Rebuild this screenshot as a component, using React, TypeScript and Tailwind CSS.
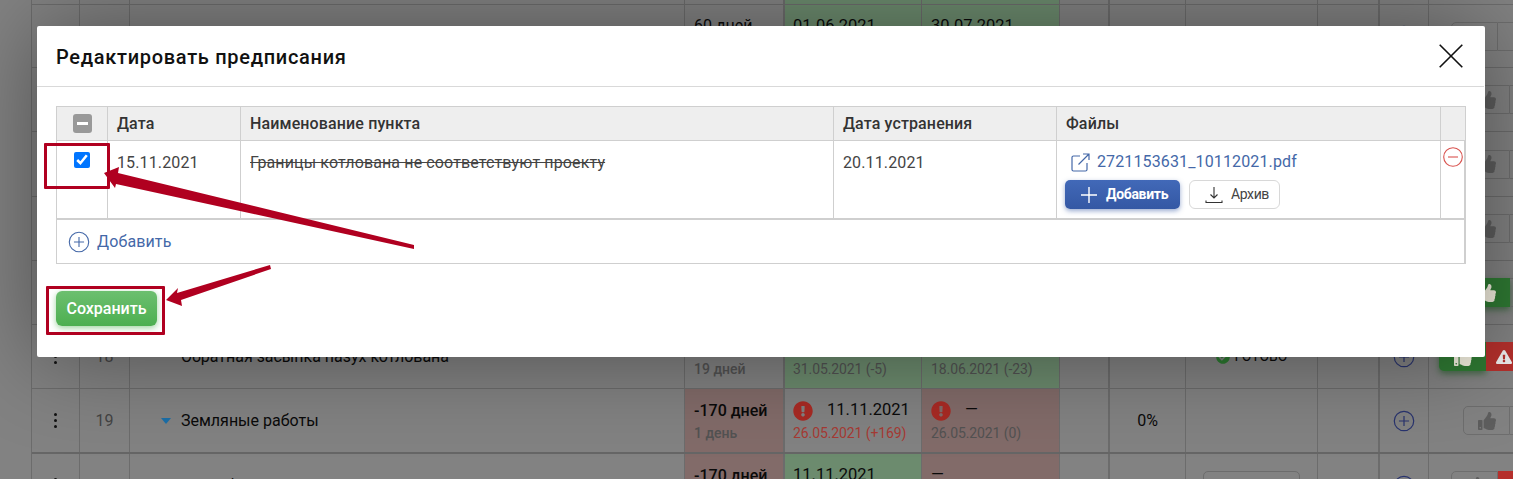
import React from "react";
import { FaThumbsUp, FaExclamationCircle, FaExclamationTriangle, FaCheckCircle } from "react-icons/fa";

const GRID = "grid grid-cols-[48px_50px_555px_100px_137px_138px_50px_76px_132px_62px_49px_85px]";

function Cell({ className = "", children }: { className?: string; children?: React.ReactNode }) {
  return <div className={`border-r border-[#6c6c6c] min-w-0 overflow-hidden ${className}`}>{children}</div>;
}

function PlusCircle({ size, color, strokeWidth = 1.3 }: { size: number; color: string; strokeWidth?: number }) {
  return (
    <svg width={size} height={size} viewBox="0 0 24 24" fill="none" stroke={color} strokeWidth={strokeWidth}>
      <circle cx="12" cy="12" r="10.6" />
      <path d="M12 6.5v11M6.5 12h11" />
    </svg>
  );
}

function Dots() {
  return (
    <div className="flex flex-col gap-[3px] items-center">
      <span className="w-[3px] h-[3px] rounded-full bg-[#111]" />
      <span className="w-[3px] h-[3px] rounded-full bg-[#111]" />
      <span className="w-[3px] h-[3px] rounded-full bg-[#111]" />
    </div>
  );
}

function Like({ variant }: { variant: "outline" | "green" | "greenRed" | "outlineRed" }) {
  const green = variant === "green" || variant === "greenRed";
  return (
    <div className="flex h-[29px] w-[120px]">
      <div
        className={
          green
            ? "w-[47px] shrink-0 h-full rounded-l-[5px] bg-[#2f7a33] text-[#f4f0e0] flex items-center justify-center text-[18px] shadow-[0_3px_6px_rgba(30,90,35,.6)]"
            : "w-[47px] shrink-0 h-full rounded-l-[5px] border border-[#6e6e6e] text-[#5e5e5e] flex items-center justify-center text-[18px]"
        }
      >
        <FaThumbsUp />
      </div>
      {variant === "greenRed" || variant === "outlineRed" ? (
        <div className="flex-1 bg-[#b5302c] text-[#eee] flex items-center pl-[10px] text-[16px]">
          <FaExclamationTriangle />
        </div>
      ) : (
        <div className="flex-1 border border-l-0 border-[#6e6e6e]" />
      )}
    </div>
  );
}

function Row({
  h,
  border = "border-b border-[#6c6c6c]",
  num,
  name,
  caret,
  dur,
  durSub,
  durCls = "font-medium",
  c1,
  c2,
  pct,
  status,
  plus = true,
  like,
  ml = "ml-[34px]",
  durBg = "",
  c1Bg = "",
  c2Bg = "",
}: {
  h: string;
  border?: string;
  num?: string;
  name?: string;
  caret?: boolean;
  dur?: string;
  durSub?: string;
  durCls?: string;
  c1?: React.ReactNode;
  c2?: React.ReactNode;
  pct?: string;
  status?: React.ReactNode;
  plus?: boolean;
  like?: "outline" | "green" | "greenRed" | "outlineRed";
  ml?: string;
  durBg?: string;
  c1Bg?: string;
  c2Bg?: string;
}) {
  return (
    <div className={`${GRID} ${h} ${border}`}>
      <Cell className="flex items-center justify-center">{num && <Dots />}</Cell>
      <Cell className="flex items-center justify-center text-[16px] text-[#444]">{num}</Cell>
      <Cell className="flex items-center pl-[31px] gap-[10px] text-[16px] text-[#0a0a0a] whitespace-nowrap">
        {caret && <span className="w-0 h-0 border-x-[5px] border-x-transparent border-t-[6px] border-t-[#1b6fa8]" />}
        {name && <span className={caret ? "" : "ml-[20px]"}>{name}</span>}
      </Cell>
      <Cell className={`border-r-2 flex flex-col justify-center pl-[9px] pt-[2px] ${durBg}`}>
        <div className={`text-[16px] text-[#0a0a0a] leading-[22px] whitespace-nowrap ${durCls}`}>{dur}</div>
        <div className="text-[14px] font-medium text-[#525252] leading-[22px] whitespace-nowrap">{durSub}</div>
      </Cell>
      <Cell className={`flex flex-col justify-center pl-[8px] pt-[2px] ${c1Bg}`}>{c1}</Cell>
      <Cell className={`flex flex-col justify-center pl-[9px] pt-[2px] ${c2Bg}`}>{c2}</Cell>
      <Cell className="border-r-2" />
      <Cell className="flex items-center justify-center text-[16px] text-[#0a0a0a]">{pct}</Cell>
      <Cell className="flex items-center justify-center px-[17px]">{status}</Cell>
      <Cell className="border-r-2" />
      <Cell className="flex items-center justify-center">{plus && <PlusCircle size={22} color="#28336e" />}</Cell>
      <div className="flex items-center overflow-hidden">
        <div className={ml}>{like && <Like variant={like} />}</div>
      </div>
    </div>
  );
}

function DateLine({ main, sub, subCls = "text-[#525252]", alert }: { main: string; sub?: string; subCls?: string; alert?: boolean }) {
  return (
    <>
      <div className="flex items-center h-[22px] text-[16.5px] text-[#0a0a0a] whitespace-nowrap">
        {alert && <FaExclamationCircle className="text-[20px] text-[#a82a24] mr-[14px]" />}
        {main}
      </div>
      <div className={`text-[14px] tracking-[-0.1px] leading-[22px] whitespace-nowrap ${subCls}`}>{sub}</div>
    </>
  );
}

function Background() {
  const G = "bg-[#6c8b6e]";
  const R = "bg-[#826b69]";
  return (
    <div className="ml-[31px] border-l border-[#6c6c6c]">
      <div className={`${GRID} h-[5px] border-b border-[#6c6c6c]`}>
        <Cell /><Cell /><Cell /><Cell className="border-r-2" /><Cell className={G} /><Cell className={G} /><Cell className="border-r-2" /><Cell /><Cell /><Cell className="border-r-2" /><Cell /><div />
      </div>
      <Row h="h-[63px]" dur="60 дней" durCls="font-normal" durSub="60 дней" c1={<DateLine main="01.06.2021" sub="01.06.2021" />} c2={<DateLine main="30.07.2021" sub="30.07.2021" />} c1Bg={G} c2Bg={G} pct="100%" like="outline" ml="ml-[22px]" />
      <Row h="h-[64px]" like="outline" />
      <Row h="h-[65px]" like="outline" />
      <Row h="h-[64px]" like="outline" />
      <Row h="h-[64px]" like="green" />
      <Row
        h="h-[64px]"
        num="18"
        name="Обратная засыпка пазух котлована"
        dur={"\u00a0"}
        durSub="19 дней"
        c1={<DateLine main={"\u00a0"} sub="31.05.2021 (-5)" />}
        c2={<DateLine main={"\u00a0"} sub="18.06.2021 (-23)" />}
        c1Bg={G}
        c2Bg={G}
        status={
          <span className="flex items-center gap-[5px] text-[14px] text-[#0a0a0a]">
            <FaCheckCircle className="text-[#2c7a30]" />
            ГОТОВО
          </span>
        }
        like="greenRed"
        ml="ml-[10px]"
      />
      <Row
        h="h-[65px]"
        border="border-b-2 border-[#666666]"
        num="19"
        caret
        name="Земляные работы"
        dur="-170 дней"
        durSub="1 день"
        durBg={R}
        c1={<DateLine alert main="11.11.2021" sub="26.05.2021 (+169)" subCls="text-[#a63a34]" />}
        c2={<DateLine alert main="—" sub="26.05.2021 (0)" />}
        c2Bg={R}
        pct="0%"
        like="outline"
      />
      <Row
        h="h-[64px]"
        num="20"
        name="Разработка грунта в котловане экскаватором с погрузкой"
        dur="-170 дней"
        durSub="1 день"
        durBg={R}
        c1={<DateLine main="11.11.2021" sub="26.05.2021" />}
        c1Bg={G}
        c2={<DateLine main="—" sub="26.05.2021" />}
        c2Bg={R}
        pct="0%"
        status={<div className="w-full h-[29px] rounded-[5px] border border-[#6c6c6c]" />}
        like="outlineRed"
        ml="ml-[22px]"
      />
    </div>
  );
}

function Modal() {
  const th = "border-r border-b border-[#cfcfcf] bg-[#eeeeee] h-[34px] flex items-center pl-[9px] text-[16px] tracking-[0.13px] font-medium text-[#333]";
  const td = "border-r border-[#cfcfcf] pl-[9px] pt-[10px] text-[16px] tracking-[0.13px] text-[#444]";
  const cols = "grid grid-cols-[51px_133px_593px_223px_384px_24px]";
  return (
    <div className="absolute left-[37px] top-[26px] w-[1448px] h-[331px] bg-white rounded-[2px] shadow-[0_0_90px_rgba(0,0,0,0.4)]">
      <div className="h-[61px] border-b border-[#d9d9d9] flex items-center justify-between pl-[19px] pr-[21px] mr-[1px]">
        <h2 className="text-[20px] pt-[1px] font-medium text-[#111] tracking-[0.7px]">Редактировать предписания</h2>
        <svg width="24" height="24" viewBox="0 0 24 24" stroke="#111" strokeWidth="1.6" fill="none">
          <path d="M0.7 0.7 23.3 23.3M23.3 0.7 0.7 23.3" />
        </svg>
      </div>
      <div className="ml-[19px] mt-[19px] w-[1410px] border border-[#cfcfcf] border-r-2">
        <div className={cols}>
          <div className={`${th} justify-center !pl-0`}>
            <span className="w-[19px] h-[19px] rounded-[3px] bg-[#999] flex items-center justify-center">
              <span className="w-[11px] h-[3px] bg-white" />
            </span>
          </div>
          <div className={th}>Дата</div>
          <div className={th}>Наименование пункта</div>
          <div className={th}>Дата устранения</div>
          <div className={th}>Файлы</div>
          <div className={`${th} !border-r-0`} />
        </div>
        <div className={`${cols} h-[79px] border-b-2 border-[#cfcfcf]`}>
          <div className="border-r border-[#cfcfcf] flex justify-center pt-[11px]">
            <input type="checkbox" defaultChecked className="w-[16px] h-[16px] accent-[#0075ff]" />
          </div>
          <div className={td}>15.11.2021</div>
          <div className={`${td} line-through`}>Границы котлована не соответствуют проекту</div>
          <div className={td}>20.11.2021</div>
          <div className="border-r border-[#cfcfcf] pl-[8px] pt-[10px]">
            <div className="flex items-center gap-[7px] pl-[6px] text-[16px] tracking-[0.13px] leading-[22px] text-[#4468a8]">
              <svg width="19" height="19" viewBox="0 0 19 19" fill="none" stroke="#4468a8" strokeWidth="1.2">
                <path d="M9 3H2.500a1.500 1.500 0 0 0-1.500 1.500v12A1.500 1.500 0 0 0 2.500 18h12a1.500 1.500 0 0 0 1.500-1.500V10" />
                <path d="M7.500 11.500 18 1M12 1h6v6" />
              </svg>
              2721153631_10112021.pdf
            </div>
            <div className="flex gap-[9px] mt-[7px]">
              <button className="w-[115px] h-[29px] rounded-[5px] bg-gradient-to-b from-[#4269b8] to-[#3458a4] shadow-[0_2px_5px_rgba(52,88,164,.5)] text-white text-[14px] tracking-[-0.3px] font-bold flex items-center pl-[16px] gap-[9px]">
                <svg width="16" height="16" viewBox="0 0 16 16" stroke="#fff" strokeWidth="1.4">
                  <path d="M8 0v16M0 8h16" />
                </svg>
                Добавить
              </button>
              <button className="w-[91px] h-[29px] rounded-[6px] border border-[#d8d8d8] text-[#444] text-[14px] tracking-[-0.4px] flex items-center pl-[15px] gap-[8px]">
                <svg width="18" height="18" viewBox="0 0 18 18" fill="none" stroke="#333" strokeWidth="1.1">
                  <path d="M9 1v11M5.500 8.500 9 12l3.500-3.500M1 14.500v2h16v-2" />
                </svg>
                Архив
              </button>
            </div>
          </div>
          <div className="flex justify-center pt-[6px]">
            <svg width="20" height="20" viewBox="0 0 20 20" fill="none" stroke="#d9534f" strokeWidth="1.1">
              <circle cx="10" cy="10" r="9.300" />
              <path d="M5 10h10" />
            </svg>
          </div>
        </div>
        <div className="h-[43px] flex items-center pl-[11px] gap-[7px] text-[16px] tracking-[0.13px] text-[#4468a8]">
          <PlusCircle size={22} color="#4468a8" strokeWidth={1.2} />
          Добавить
        </div>
      </div>
      <button className="ml-[19px] mt-[27px] w-[101px] h-[35px] rounded-[6px] bg-gradient-to-b from-[#6cbf6f] to-[#4caf50] shadow-[0_2px_6px_rgba(76,175,80,.55)] text-white text-[16px] font-medium">
        Сохранить
      </button>
    </div>
  );
}

function Annotations() {
  return (
    <>
      <div className="absolute left-[44px] top-[143px] w-[66px] h-[46px] border-[3px] border-[#b00020] rounded-[1px]" />
      <div className="absolute left-[46px] top-[286px] w-[119px] h-[49px] border-[3px] border-[#b00020] rounded-[1px]" />
      <svg className="absolute left-0 top-0 pointer-events-none" width="1513" height="479" fill="#b00020">
        <polygon points="104,173 119,167 118,173 414,245 414,249 116,184 115,188" />
        <polygon points="166,300 178,288 177,293 270,265 271,269 181,300 182,306" />
      </svg>
    </>
  );
}

export default function App() {
  return (
    <div className="relative w-[1513px] h-[479px] overflow-hidden bg-[#828282] [font-family:Roboto,sans-serif]">
      <Background />
      <Modal />
      <Annotations />
    </div>
  );
}
